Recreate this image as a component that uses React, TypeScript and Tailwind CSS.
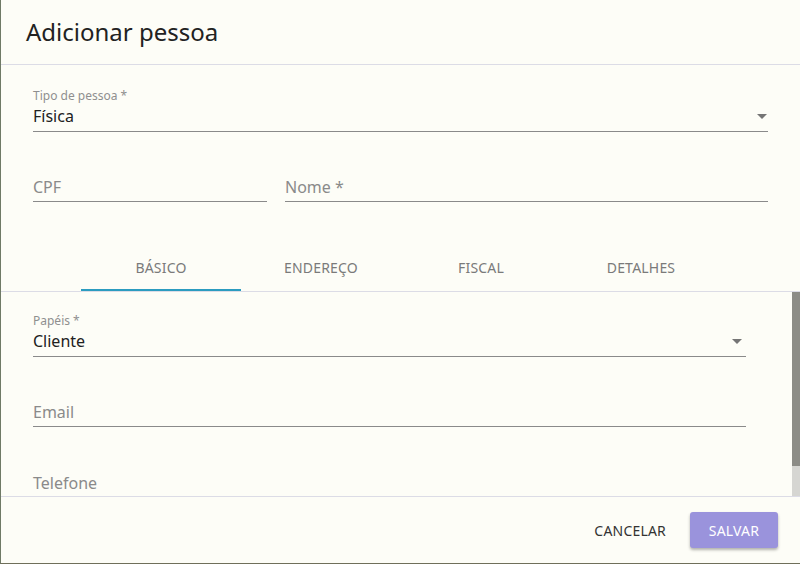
import React from "react";

function Caret() {
  return (
    <svg width="10" height="5" viewBox="0 0 10 5" className="shrink-0">
      <path d="M0 0 L10 0 L5 5 Z" fill="#757575" />
    </svg>
  );
}

export default function App() {
  const font = { fontFamily: '"Noto Sans", "Open Sans", sans-serif' };
  return (
    <div
      className="w-[800px] h-[564px] bg-[#fdfdf7] flex flex-col overflow-hidden border-l border-l-[#6f7a66] border-b border-b-[#6f6f5a] text-[#212121]"
      style={font}
    >
      {/* Header */}
      <div className="h-[65px] shrink-0 flex items-center pl-[25px] border-b border-[#dcdce6]">
        <h1 className="text-[24px] leading-none text-[#222]">Adicionar pessoa</h1>
      </div>

      {/* Top fields */}
      <div className="shrink-0 pl-[32px] pr-[32px] pt-[24px]">
        <div className="border-b border-[#8a8a8a]">
          <div className="text-[12px] leading-[14px] text-[#8f8f8f]">Tipo de pessoa *</div>
          <div className="flex items-center justify-between h-[28px] pb-[2px]">
            <span className="text-[16px]">Física</span>
            <span className="mr-[1px]"><Caret /></span>
          </div>
        </div>
        <div className="flex gap-[18px] mt-[41px]">
          <div className="w-[234px] border-b border-[#8a8a8a] h-[29px] flex items-center text-[16px] text-[#8a8a8a]">
            CPF
          </div>
          <div className="flex-1 border-b border-[#8a8a8a] h-[29px] flex items-center text-[16px] text-[#8a8a8a]">
            Nome *
          </div>
        </div>
      </div>

      {/* Tabs */}
      <div className="shrink-0 mt-[41px] border-b border-[#dcdce6] pl-[80px] flex">
        {["BÁSICO", "ENDEREÇO", "FISCAL", "DETALHES"].map((t, i) => (
          <div key={t} className="relative w-[160px] h-[48px] flex items-center justify-center text-[14px] tracking-[0.2px] text-[#7a7a7a]">
            {t}
            {i === 0 && <div className="absolute left-0 right-0 bottom-0 h-[2px] bg-[#2b9cc0]" />}
          </div>
        ))}
      </div>

      {/* Scroll area */}
      <div className="flex-1 flex min-h-0 border-b border-[#dcdce6]">
        <div className="flex-1 pl-[32px] pr-[46px] pt-[22px] overflow-hidden">
          <div className="border-b border-[#8a8a8a]">
            <div className="text-[12px] leading-[14px] text-[#8f8f8f]">Papéis *</div>
            <div className="flex items-center justify-between h-[28px] pb-[2px]">
              <span className="text-[16px]">Cliente</span>
              <span className="mr-[4px]"><Caret /></span>
            </div>
          </div>
          <div className="mt-[41px] border-b border-[#8a8a8a] h-[29px] flex items-center text-[16px] text-[#8a8a8a]">
            Email
          </div>
          <div className="mt-[41px] h-[29px] flex items-center text-[16px] text-[#8a8a8a]">
            Telefone
          </div>
        </div>
        <div className="w-[8px] bg-[#d6d6d2] flex flex-col">
          <div className="h-[174px] bg-[#8c8c86]" />
        </div>
      </div>

      {/* Footer */}
      <div className="flex-1 max-h-[66px] min-h-[66px] flex items-center justify-end pr-[22px] gap-[8px]">
        <button className="h-[36px] px-[16px] text-[14px] tracking-[0.2px] text-[#333]">CANCELAR</button>
        <button className="h-[36px] w-[88px] rounded-[3px] bg-[#9a93dc] text-white text-[14px] tracking-[0.2px] shadow-[0_2px_3px_rgba(0,0,0,0.3)]">
          SALVAR
        </button>
      </div>
    </div>
  );
}
